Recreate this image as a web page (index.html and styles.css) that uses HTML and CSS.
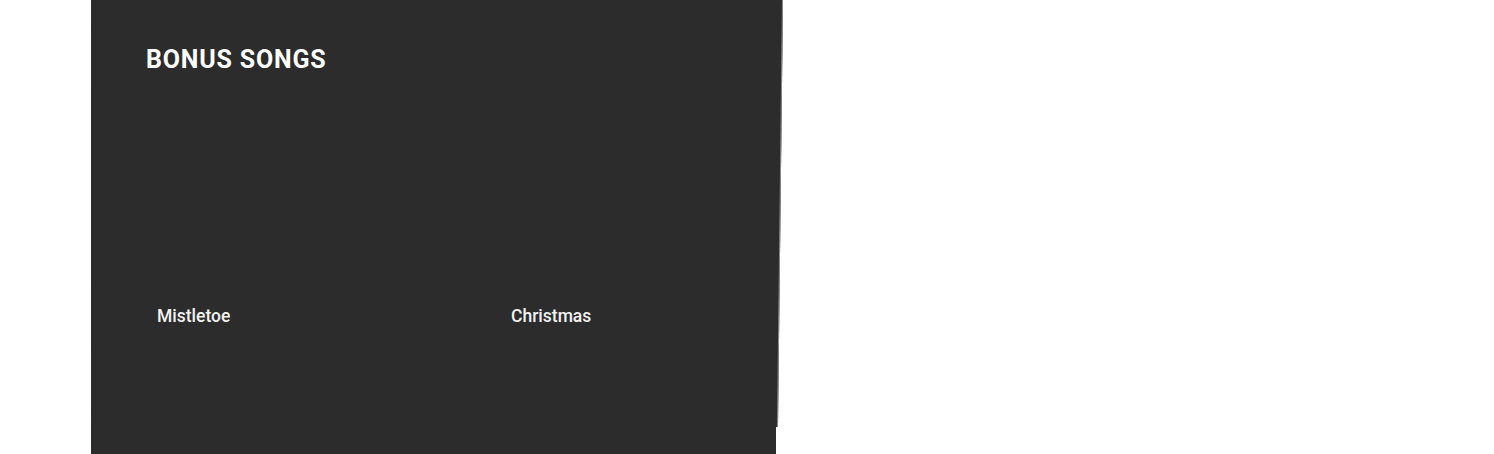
FILE: index.html
```html
<!DOCTYPE html>
<html>
<head>
<meta charset="utf-8">
<link rel="stylesheet" href="styles.css">
</head>
<body>
<div class="page">
  <section class="bonus">
    <h2 class="bonus-title">BONUS SONGS</h2>
    <div class="songs">
      <div class="song">
        <div class="song-thumb"></div>
        <div class="song-name">Mistletoe</div>
      </div>
      <div class="song">
        <div class="song-thumb"></div>
        <div class="song-name">Christmas</div>
      </div>
    </div>
  </section>
</div>
</body>
</html>
```
FILE: styles.css
```css
html, body {
  margin: 0;
  padding: 0;
  background: #ffffff;
  height: 100%;
}
.page {
  padding-left: 91px;
  height: 454px;
  overflow: hidden;
}
.bonus {
  position: relative;
  width: 685px;
  height: 454px;
  background: #2c2c2c;
  box-sizing: border-box;
  padding: 46px 0 0 55px;
  font-family: Roboto, "Noto Sans", sans-serif;
  color: #ffffff;
}
.bonus::before {
  content: "";
  position: absolute;
  left: 0;
  top: 0;
  width: 687px;
  height: 427px;
  box-sizing: border-box;
  background: #2c2c2c;
  border-right: 1px solid #8a8a8a;
  transform-origin: 0 100%;
  transform: skewX(-0.67deg);
}
.bonus-title {
  position: relative;
  margin: 0;
  font-size: 25px;
  font-weight: 700;
  line-height: 28px;
  letter-spacing: 0.8px;
}
.songs {
  position: relative;
  display: grid;
  grid-template-columns: 354px 250px;
  margin-top: 12px;
}
.song {
  padding: 0 11px;
}
.song-thumb {
  height: 220px;
}
.song-name {
  font-size: 17.5px;
  font-weight: 500;
  line-height: 21px;
  color: #f2f2f2;
}
```
